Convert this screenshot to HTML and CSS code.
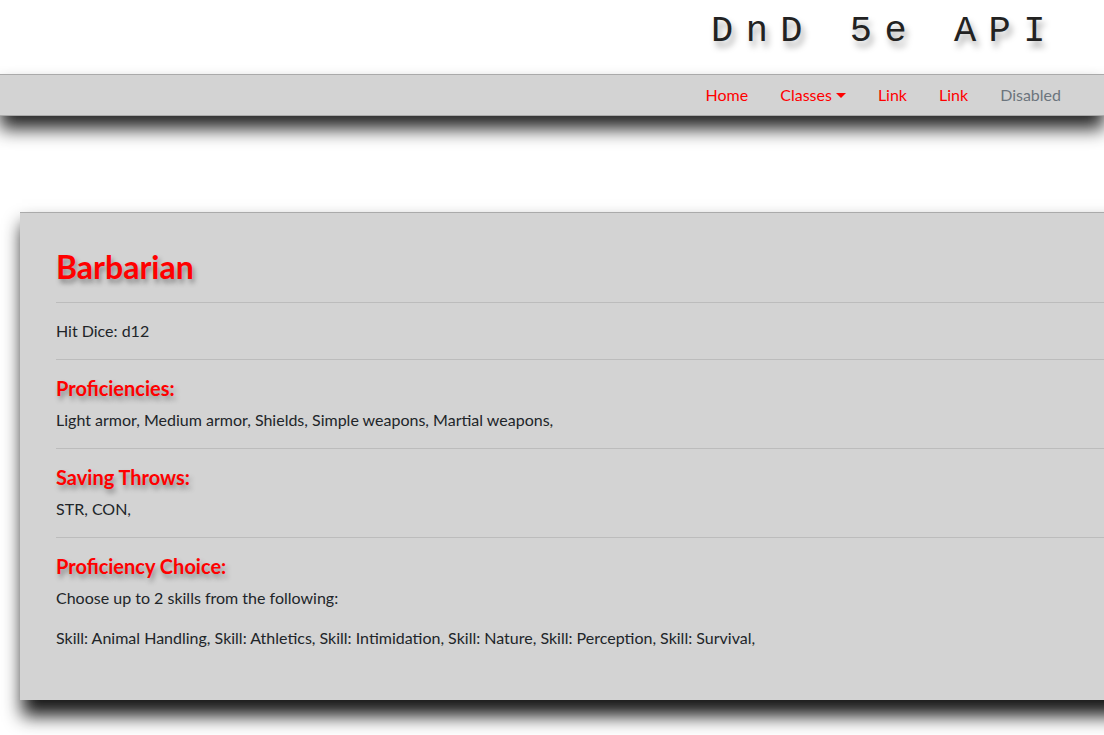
FILE: index.html
```html
<!DOCTYPE html>
<html lang="en">
<head>
<meta charset="utf-8">
<title>DnD 5e API</title>
<link rel="stylesheet" href="styles.css">
</head>
<body>
<header class="masthead">
  <h1 class="site-title">DnD 5e API</h1>
</header>
<nav class="navbar">
  <ul class="nav">
    <li><a class="nav-link" href="#">Home</a></li>
    <li><a class="nav-link dropdown-toggle" href="#">Classes</a></li>
    <li><a class="nav-link" href="#">Link</a></li>
    <li><a class="nav-link" href="#">Link</a></li>
    <li><a class="nav-link disabled" href="#">Disabled</a></li>
  </ul>
</nav>
<main class="page">
  <section class="card">
    <h2 class="card-title">Barbarian</h2>
    <hr class="rule">
    <p class="text">Hit Dice: d12</p>
    <hr class="rule">
    <h5 class="section-title">Proficiencies:</h5>
    <p class="text">Light armor, Medium armor, Shields, Simple weapons, Martial weapons,</p>
    <hr class="rule">
    <h5 class="section-title">Saving Throws:</h5>
    <p class="text">STR, CON,</p>
    <hr class="rule">
    <h5 class="section-title">Proficiency Choice:</h5>
    <p class="text">Choose up to 2 skills from the following:</p>
    <p class="text">Skill: Animal Handling, Skill: Athletics, Skill: Intimidation, Skill: Nature, Skill: Perception, Skill: Survival,</p>
  </section>
</main>
</body>
</html>
```
FILE: styles.css
```css
html, body {
  margin: 0;
  padding: 0;
  background: #fff;
}
body {
  font-family: "Lato", "Open Sans", sans-serif;
  font-size: 16px;
  line-height: 24px;
  color: #212529;
}
.masthead {
  height: 74px;
  display: flex;
  justify-content: flex-end;
  align-items: flex-start;
  padding-right: 46px;
}
.site-title {
  margin: 11px 0 0 0;
  font-family: "Liberation Mono", "Courier New", monospace;
  font-weight: normal;
  font-size: 37px;
  line-height: 40px;
  letter-spacing: 12.5px;
  color: #222;
  text-shadow: 3px 6px 6px #aaa;
}
.navbar {
  background: #d3d3d3;
  border-top: 1px solid #aaa;
  border-bottom: 1px solid #aaa;
  box-shadow: 0 13px 18px rgba(0, 0, 0, 0.85);
  display: flex;
  justify-content: flex-end;
  padding: 0 27px 0 0;
  position: relative;
}
.nav {
  list-style: none;
  margin: 0;
  padding: 0;
  display: flex;
}
.nav-link {
  display: block;
  padding: 8px 16px;
  color: #f00;
  text-decoration: none;
}
.nav-link.disabled {
  color: #6c757d;
}
.dropdown-toggle::after {
  content: "";
  display: inline-block;
  margin-left: 4px;
  vertical-align: 3px;
  border-top: 5px solid #f00;
  border-left: 5px solid transparent;
  border-right: 5px solid transparent;
}
.page {
  padding: 96px 0 40px 20px;
  overflow: hidden;
}
.card {
  width: calc(100% + 40px);
  box-sizing: border-box;
  background: #d3d3d3;
  border-top: 1px solid #aaa;
  box-shadow: 4px 14px 17px 2px rgba(0, 0, 0, 0.9);
  padding: 35px 36px 34px 36px;
}
.card-title {
  margin: 0 0 8px 0;
  font-size: 32px;
  line-height: 38px;
  font-weight: 700;
  color: #f00;
  text-shadow: 2px 4px 5px #888;
}
.section-title {
  margin: 0 0 8px 0;
  font-size: 20px;
  line-height: 24px;
  font-weight: 700;
  color: #f00;
  text-shadow: 2px 4px 5px #888;
}
.rule {
  margin: 16px 0;
  border: 0;
  border-top: 1px solid #bcbcbc;
}
.text {
  margin: 0 0 16px 0;
}
```
